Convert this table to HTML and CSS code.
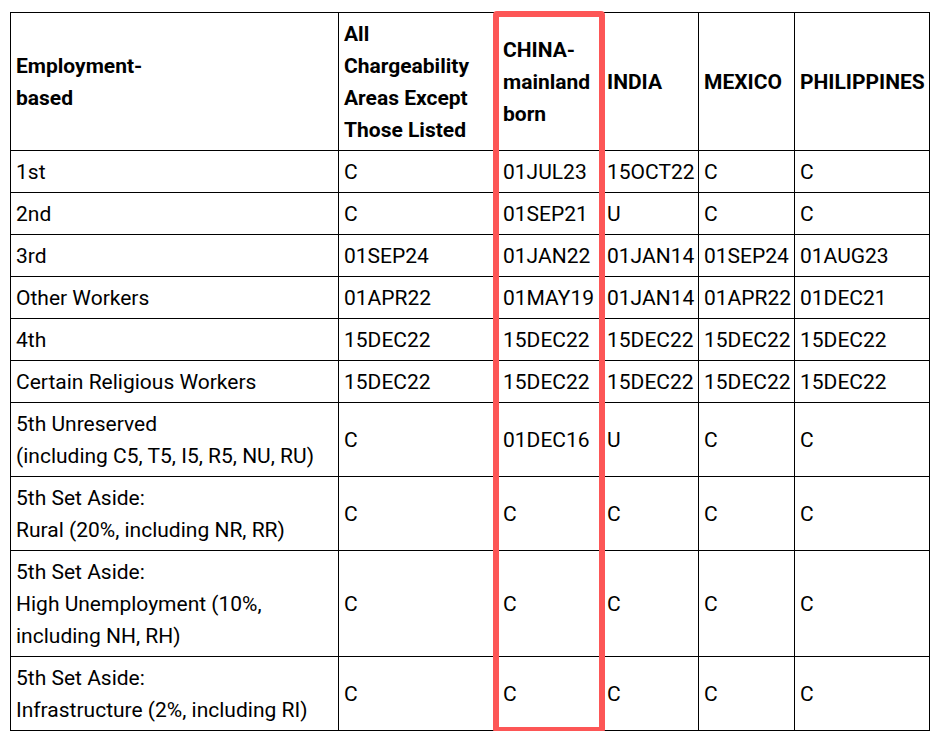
FILE: index.html
```html
<!DOCTYPE html>
<html lang="en">
<head>
<meta charset="utf-8">
<title>Employment-based Final Action Dates</title>
<link rel="stylesheet" href="styles.css">
</head>
<body>
<div class="wrap">
  <table class="dates">
    <colgroup>
      <col class="c-cat">
      <col class="c-all">
      <col class="c-china">
      <col class="c-india">
      <col class="c-mexico">
      <col class="c-phil">
    </colgroup>
    <thead>
      <tr>
        <th>Employment-<br>based</th>
        <th>All Chargeability Areas Except Those Listed</th>
        <th>CHINA-<br>mainland born</th>
        <th>INDIA</th>
        <th>MEXICO</th>
        <th>PHILIPPINES</th>
      </tr>
    </thead>
    <tbody>
      <tr><td>1st</td><td>C</td><td>01JUL23</td><td>15OCT22</td><td>C</td><td>C</td></tr>
      <tr><td>2nd</td><td>C</td><td>01SEP21</td><td>U</td><td>C</td><td>C</td></tr>
      <tr><td>3rd</td><td>01SEP24</td><td>01JAN22</td><td>01JAN14</td><td>01SEP24</td><td>01AUG23</td></tr>
      <tr><td>Other Workers</td><td>01APR22</td><td>01MAY19</td><td>01JAN14</td><td>01APR22</td><td>01DEC21</td></tr>
      <tr><td>4th</td><td>15DEC22</td><td>15DEC22</td><td>15DEC22</td><td>15DEC22</td><td>15DEC22</td></tr>
      <tr><td>Certain Religious Workers</td><td>15DEC22</td><td>15DEC22</td><td>15DEC22</td><td>15DEC22</td><td>15DEC22</td></tr>
      <tr><td>5th Unreserved<br>(including C5, T5, I5, R5, NU, RU)</td><td>C</td><td>01DEC16</td><td>U</td><td>C</td><td>C</td></tr>
      <tr><td>5th Set Aside:<br>Rural (20%, including NR, RR)</td><td>C</td><td>C</td><td>C</td><td>C</td><td>C</td></tr>
      <tr><td>5th Set Aside:<br>High Unemployment (10%,<br>including NH, RH)</td><td>C</td><td>C</td><td>C</td><td>C</td><td>C</td></tr>
      <tr><td>5th Set Aside:<br>Infrastructure (2%, including RI)</td><td>C</td><td>C</td><td>C</td><td>C</td><td>C</td></tr>
    </tbody>
  </table>
  <div class="highlight" aria-hidden="true"></div>
</div>
</body>
</html>
```

FILE: styles.css
```css
html, body {
  margin: 0;
  padding: 0;
  background: #ffffff;
}

body {
  font-family: Roboto, "Liberation Sans", Arial, sans-serif;
  color: #000000;
}

.wrap {
  position: relative;
  width: 919px;
  margin: 12px 0 0 10px;
}

.dates {
  border-collapse: collapse;
  table-layout: fixed;
  width: 919px;
  font-size: 21px;
  line-height: 32px;
}

.c-cat { width: 328px; }
.c-all { width: 159px; }
.c-china { width: 104px; }
.c-india { width: 97px; }
.c-mexico { width: 96px; }
.c-phil { width: 135px; }

.dates th,
.dates td {
  border: 1px solid #000000;
  padding: 5px 4px 4px 5px;
  text-align: left;
  vertical-align: middle;
  white-space: normal;
}

.dates th {
  font-weight: 700;
}

.dates td {
  font-weight: 400;
}

.highlight {
  position: absolute;
  left: 483px;
  top: -1px;
  width: 100px;
  height: 710px;
  border: 6px solid #fd5656;
  border-radius: 4px;
  pointer-events: none;
}
```
